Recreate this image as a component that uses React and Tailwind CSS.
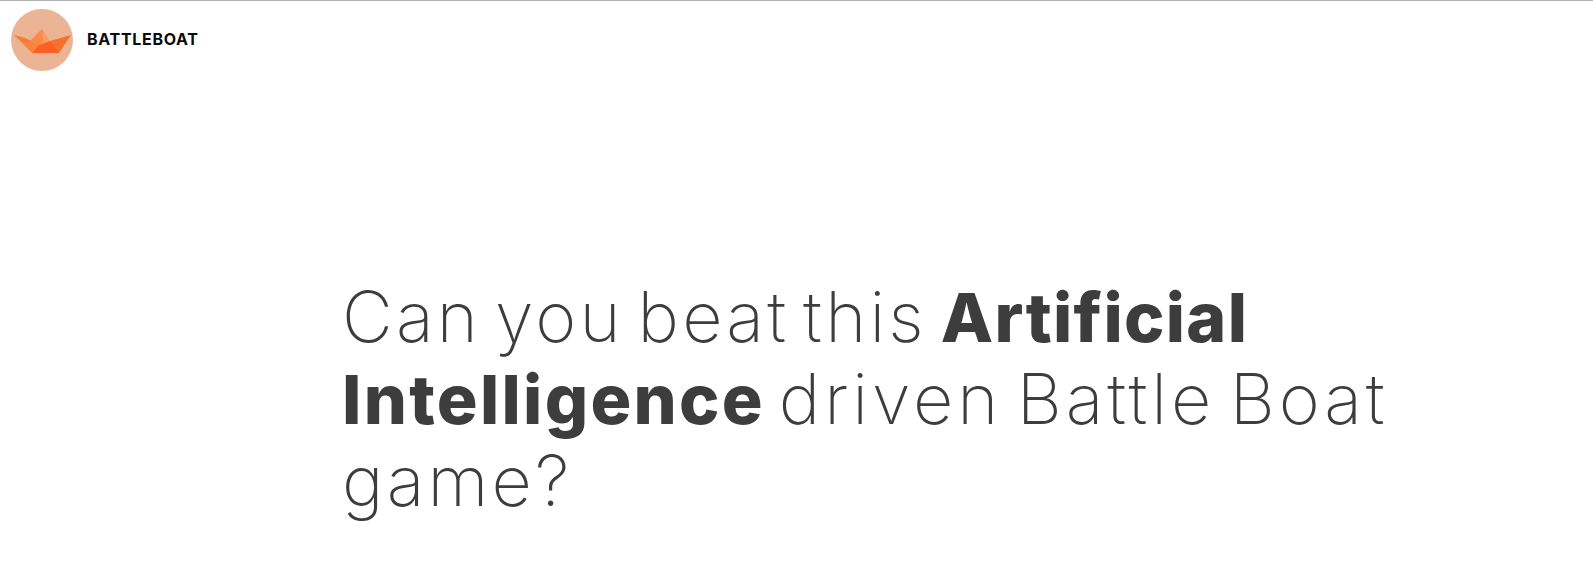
export default function App() {
  return (
    <div className="h-[565px] overflow-hidden bg-white border-t border-[#b5b5b5]" style={{ fontFamily: '"Inter", "Noto Sans", sans-serif' }}>
      {/* Barre du haut */}
      <header className="flex items-center pl-[11px] pt-[8px]">
        <div className="w-[62px] h-[62px] rounded-full bg-[#ebb595] flex items-center justify-center">
          <svg viewBox="0 0 62 62" className="w-[62px] h-[62px]">
            <polygon points="3,26 22,32 30,36 21,44" fill="#f8853f" />
            <polygon points="3,26 14,29 20,33 12,33" fill="#fb7a35" />
            <polygon points="19,32 31,20 36,31 28,36" fill="#fb8a4a" />
            <polygon points="31,20 39,32 32,35" fill="#fc9a5f" />
            <polygon points="39,32 60,26 48,44 42,44" fill="#f8702f" />
            <polygon points="21,44 28,36 39,32 48,44" fill="#fb5f24" />
          </svg>
        </div>
        <span className="ml-[14px] -mt-[3px] text-[16px] font-bold text-[#0b0b0b] tracking-[0.7px]">BATTLEBOAT</span>
      </header>

      {/* Titre principal */}
      <main className="pl-[342px] pr-[150px] pt-[205px]">
        <h1 className="text-[70px] leading-[81px] font-extralight text-[#3d3d3d] tracking-[3.2px] [word-spacing:-9px]">
          Can you beat this <strong className="font-extrabold text-[68px] tracking-[1.3px]">Artificial</strong> <strong className="font-extrabold text-[68px] tracking-[2.3px]">Intelligence</strong> <span className="tracking-[3.9px]">driven Battle Boat</span> game?
        </h1>
      </main>
    </div>
  );
}
